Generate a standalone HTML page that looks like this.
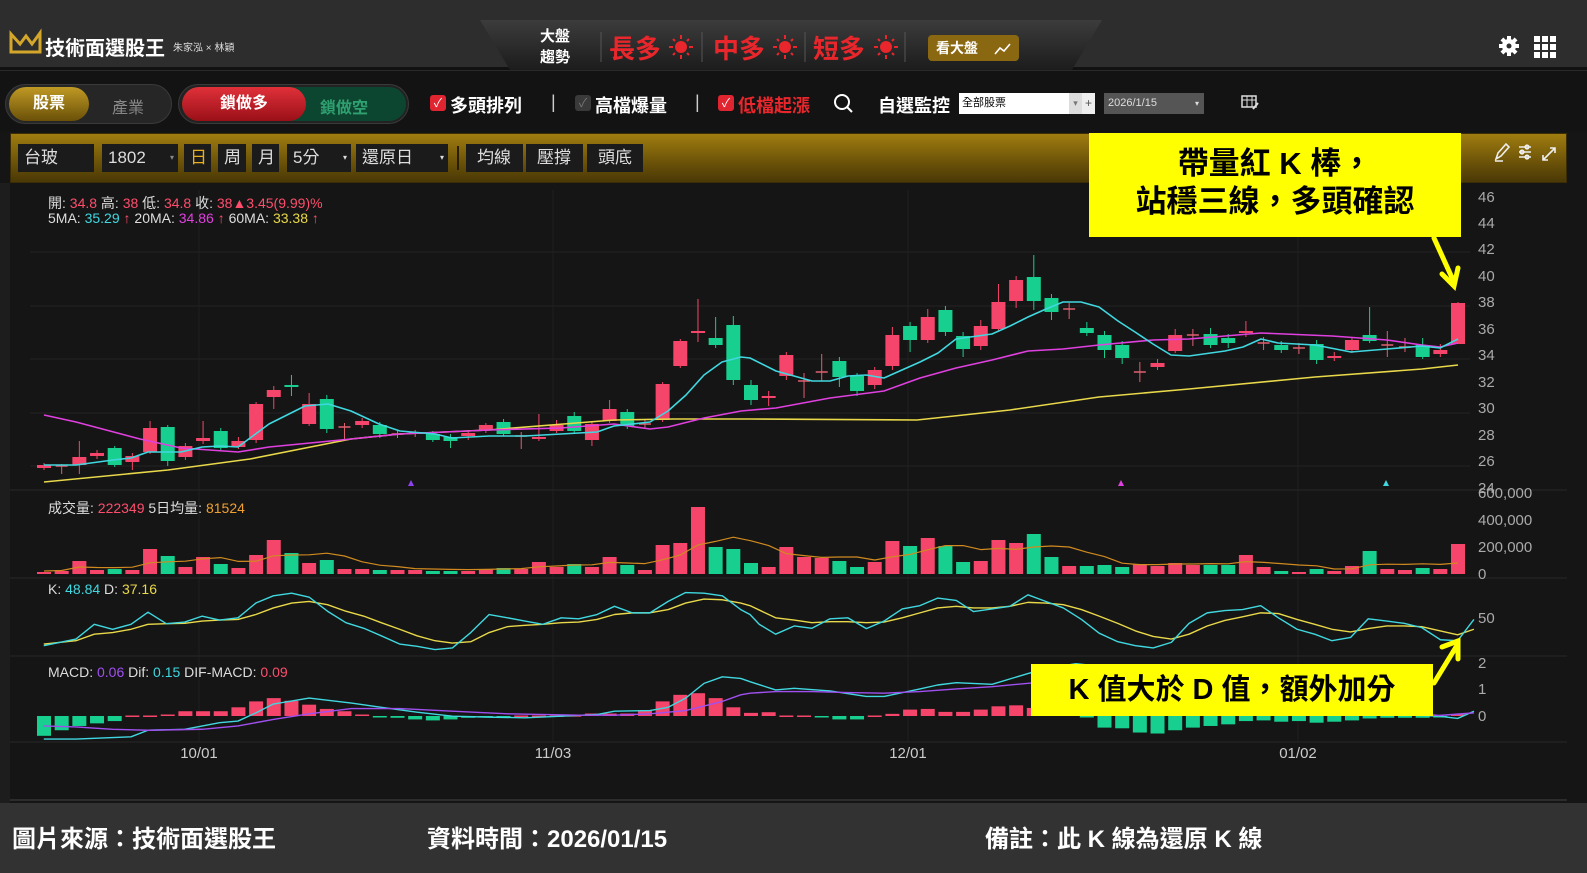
<!DOCTYPE html>
<html><head><meta charset="utf-8">
<style>
*{margin:0;padding:0;box-sizing:border-box}
body{width:1587px;height:873px;overflow:hidden;background:#151515;font-family:"Liberation Sans","Noto Sans CJK TC",sans-serif;position:relative;color:#ddd}
.abs{position:absolute}
.top{left:0;top:0;width:1587px;height:70px;background:#2d2d2d;border-bottom:3px solid #111}
.row2{left:0;top:70px;width:1587px;height:62px;background:#131313;border-top:1px solid #2a2a2a}
.gold{left:10px;top:133px;width:1557px;height:50px;background:linear-gradient(#a07d10,#6b5208 60%,#4a3906);border:1px solid #3a2d05}
.box{position:absolute;top:10px;height:28px;background:#1b1b1b;color:#ddd;font-size:17px;line-height:28px;padding-left:6px}
.bot{left:0;top:803px;width:1587px;height:70px;background:#323232;color:#fff;font-size:24px;font-weight:bold}
.cb{position:absolute;width:16px;height:16px;border-radius:3px;background:#e02530;color:#fff;font-size:12px;line-height:16px;text-align:center}
.lbl{position:absolute;font-size:18px;font-weight:bold;color:#fff}
.callout{position:absolute;background:#ffff00;color:#000;font-weight:bold;text-align:center}
</style></head><body>

<div class="abs top"></div>
<svg class="abs" style="left:0;top:0" width="1587" height="70">
<defs><linearGradient id="tab" x1="0" y1="0" x2="0" y2="1"><stop offset="0" stop-color="#3c3c3c"/><stop offset="1" stop-color="#1c1c1c"/></linearGradient></defs>
<polygon points="480,20 1102,20 1072,70 510,70" fill="url(#tab)"/>
<path d="M11 52 L11 34 L20 44 L26 36 L32 44 L40 33 L40 52 Z" fill="none" stroke="#d4a62a" stroke-width="3"/>
<line x1="601" y1="32" x2="601" y2="62" stroke="#555"/><line x1="702" y1="32" x2="702" y2="62" stroke="#555"/>
<line x1="805" y1="32" x2="805" y2="62" stroke="#555"/><line x1="905" y1="32" x2="905" y2="62" stroke="#555"/>
<g fill="#e8262b" stroke="#e8262b" stroke-width="2">
<circle cx="681" cy="47" r="6" stroke="none"/><circle cx="785" cy="47" r="6" stroke="none"/><circle cx="886" cy="47" r="6" stroke="none"/>
<path d="M681 35v4M681 55v4M669 47h4M689 47h4M673 39l2 2M687 53l2 2M673 55l2-2M687 41l2-2"/>
<path d="M785 35v4M785 55v4M773 47h4M793 47h4M777 39l2 2M791 53l2 2M777 55l2-2M791 41l2-2"/>
<path d="M886 35v4M886 55v4M874 47h4M894 47h4M878 39l2 2M892 53l2 2M878 55l2-2M892 41l2-2"/>
</g>
<rect x="928" y="35" width="91" height="26" rx="4" fill="#8a6812"/>
<path d="M995 54l5-6 4 3 6-7" stroke="#fff" stroke-width="1.6" fill="none"/>
<g fill="#fff"><circle cx="1509" cy="46" r="7"/><rect x="1507" y="36" width="4" height="20"/><rect x="1499" y="44" width="20" height="4"/><rect x="1507" y="36" width="4" height="20" transform="rotate(45 1509 46)"/><rect x="1507" y="36" width="4" height="20" transform="rotate(-45 1509 46)"/></g>
<circle cx="1509" cy="46" r="2.5" fill="#2d2d2d"/>
<g fill="#fff"><rect x="1534" y="36" width="6" height="6"/><rect x="1542" y="36" width="6" height="6"/><rect x="1550" y="36" width="6" height="6"/><rect x="1534" y="44" width="6" height="6"/><rect x="1542" y="44" width="6" height="6"/><rect x="1550" y="44" width="6" height="6"/><rect x="1534" y="52" width="6" height="6"/><rect x="1542" y="52" width="6" height="6"/><rect x="1550" y="52" width="6" height="6"/></g>
</svg>
<div class="abs" style="left:45px;top:32px;font-size:20px;font-weight:bold;color:#fff">技術面選股王</div>
<div class="abs" style="left:173px;top:39px;font-size:10px;color:#ddd">朱家泓 × 林穎</div>
<div class="abs" style="left:540px;top:26px;font-size:15px;font-weight:bold;color:#fff;line-height:21px">大盤<br>趨勢</div>
<div class="abs" style="left:609px;top:29px;font-size:26px;font-weight:bold;color:#e8262b">長多</div>
<div class="abs" style="left:713px;top:29px;font-size:26px;font-weight:bold;color:#e8262b">中多</div>
<div class="abs" style="left:813px;top:29px;font-size:26px;font-weight:bold;color:#e8262b">短多</div>
<div class="abs" style="left:936px;top:38px;font-size:14px;font-weight:bold;color:#fff">看大盤</div>

<div class="abs row2"></div>
<div class="abs" style="left:5px;top:84px;width:167px;height:40px;border-radius:20px;background:#262626;border:1px solid #3a3a3a"></div>
<div class="abs" style="left:9px;top:87px;width:80px;height:34px;border-radius:17px;background:linear-gradient(#c09a25,#6a5008);color:#fff;font-size:16px;font-weight:bold;text-align:center;line-height:34px">股票</div>
<div class="abs" style="left:112px;top:94px;color:#888;font-size:16px">產業</div>
<div class="abs" style="left:178px;top:84px;width:231px;height:40px;border-radius:20px;background:#222;border:1px solid #3a3a3a"></div>
<div class="abs" style="left:182px;top:87px;width:224px;height:34px;border-radius:17px;background:#0d4630"></div>
<div class="abs" style="left:182px;top:87px;width:124px;height:34px;border-radius:17px;background:linear-gradient(#e0303a,#9a1018);color:#fff;font-size:16px;font-weight:bold;text-align:center;line-height:34px">鎖做多</div>
<div class="abs" style="left:320px;top:94px;color:#2fa070;font-size:16px;font-weight:bold">鎖做空</div>
<div class="cb" style="left:430px;top:95px">✓</div><div class="lbl" style="left:450px;top:92px">多頭排列</div>
<div class="lbl" style="left:551px;top:92px;color:#ccc;font-weight:normal">|</div>
<div class="cb" style="left:575px;top:95px;background:#3a3a3a;color:#777">✓</div><div class="lbl" style="left:595px;top:92px">高檔爆量</div>
<div class="lbl" style="left:695px;top:92px;color:#ccc;font-weight:normal">|</div>
<div class="cb" style="left:718px;top:95px">✓</div><div class="lbl" style="left:738px;top:92px;color:#e8262b">低檔起漲</div>
<svg class="abs" style="left:832px;top:92px" width="24" height="24"><circle cx="10" cy="10" r="7" stroke="#fff" stroke-width="2" fill="none"/><line x1="15" y1="15" x2="20" y2="20" stroke="#fff" stroke-width="2"/></svg>
<div class="lbl" style="left:878px;top:92px">自選監控</div>
<div class="abs" style="left:959px;top:93px;width:136px;height:21px;background:#fff;color:#000;font-size:11px;line-height:21px;padding-left:3px">全部股票</div>
<div class="abs" style="left:1069px;top:93px;width:13px;height:21px;background:#ddd;color:#777;font-size:9px;text-align:center;line-height:21px">▾</div>
<div class="abs" style="left:1082px;top:93px;width:13px;height:21px;background:#eee;color:#555;font-size:12px;text-align:center;line-height:21px">+</div>
<div class="abs" style="left:1104px;top:93px;width:100px;height:21px;background:#555;color:#ddd;font-size:11px;line-height:21px;padding-left:4px">2026/1/15<span style="float:right;margin-right:5px;font-size:8px">▾</span></div>
<svg class="abs" style="left:1241px;top:94px" width="20" height="18"><rect x="1" y="2" width="14" height="11" stroke="#ddd" fill="none" stroke-width="1.5"/><line x1="1" y1="6" x2="15" y2="6" stroke="#ddd"/><line x1="6" y1="2" x2="6" y2="13" stroke="#ddd"/><line x1="11" y1="2" x2="11" y2="13" stroke="#ddd"/><path d="M12 15l5-6" stroke="#ddd" stroke-width="2"/></svg>

<div class="abs gold">
<div class="box" style="left:7px;width:76px">台玻</div>
<div class="box" style="left:91px;width:76px">1802<span style="float:right;margin-right:4px;font-size:8px;color:#888">▾</span></div>
<div class="box" style="left:173px;width:27px;color:#e8b020">日</div>
<div class="box" style="left:207px;width:28px">周</div>
<div class="box" style="left:241px;width:27px">月</div>
<div class="box" style="left:276px;width:64px">5分<span style="float:right;margin-right:4px;font-size:8px">▾</span></div>
<div class="box" style="left:345px;width:92px">還原日<span style="float:right;margin-right:4px;font-size:8px">▾</span></div>
<div class="abs" style="left:446px;top:12px;width:2px;height:24px;background:#2a1e00"></div>
<div class="box" style="left:455px;width:57px;padding-left:11px">均線</div>
<div class="box" style="left:515px;width:57px;padding-left:11px">壓撐</div>
<div class="box" style="left:576px;width:56px;padding-left:11px">頭底</div>
</div>
<svg class="abs" style="left:1490px;top:140px" width="75" height="24" stroke="#eee" stroke-width="1.6" fill="none">
<path d="M6 19l2-6 8-9 3 3-8 9z M5 21h8"/>
<path d="M29 7h12M29 12h12M29 17h12"/><circle cx="37" cy="7" r="1.8"/><circle cx="32" cy="12" r="1.8"/><circle cx="37" cy="17" r="1.8"/>
<path d="M53 20l12-12M60 8h5v5M53 15v5h5"/>
</svg>

<svg id="ch" class="abs" style="left:0;top:183px" width="1587" height="620"></svg>

<div class="abs" style="left:48px;top:193px;font-size:14px;color:#ddd;white-space:nowrap">開: <span style="color:#ff4d6d">34.8</span> 高: <span style="color:#ff4d6d">38</span> 低: <span style="color:#ff4d6d">34.8</span> 收: <span style="color:#ff4d6d">38▲3.45(9.99)%</span></div>
<div class="abs" style="left:48px;top:210px;font-size:14px;color:#ddd;white-space:nowrap">5MA: <span style="color:#40d8e0">35.29</span> <span style="color:#ff4d6d">↑</span> 20MA: <span style="color:#e040e0">34.86</span> <span style="color:#ff4d6d">↑</span> 60MA: <span style="color:#e8d84a">33.38</span> <span style="color:#ff4d6d">↑</span></div>
<div class="abs" style="left:48px;top:498px;font-size:14px;color:#ddd">成交量: <span style="color:#ff4d6d">222349</span> 5日均量: <span style="color:#f0a030">81524</span></div>
<div class="abs" style="left:48px;top:581px;font-size:14px;color:#ddd">K: <span style="color:#40d8e0">48.84</span> D: <span style="color:#e8d84a">37.16</span></div>
<div class="abs" style="left:48px;top:664px;font-size:14px;color:#ddd">MACD: <span style="color:#a050f0">0.06</span> Dif: <span style="color:#40d8e0">0.15</span> DIF-MACD: <span style="color:#ff4d6d">0.09</span></div>

<div class="callout" style="left:1089px;top:133px;width:372px;height:104px;font-size:31px;line-height:38px;padding-top:12px">帶量紅 K 棒，<br>站穩三線，多頭確認</div>
<div class="callout" style="left:1031px;top:664px;width:402px;height:52px;font-size:29px;line-height:52px">K 值大於 D 值，額外加分</div>
<svg class="abs" style="left:1420px;top:230px" width="60" height="70"><path d="M14 8 L33 50 M22 44 L34 56 L38 38" stroke="#ffff00" stroke-width="5" fill="none" stroke-linecap="round"/></svg>
<svg class="abs" style="left:1420px;top:625px" width="60" height="70"><path d="M14 58 L36 22 M22 22 L38 16 L38 34" stroke="#ffff00" stroke-width="5" fill="none" stroke-linecap="round"/></svg>

<div class="abs bot">
<div class="abs" style="left:12px;top:16px">圖片來源：技術面選股王</div>
<div class="abs" style="left:427px;top:16px">資料時間：2026/01/15</div>
<div class="abs" style="left:985px;top:16px">備註：此 K 線為還原 K 線</div>
</div>

<script>
const svg=document.getElementById('ch');const OY=183;let h='';
function L(x1,y1,x2,y2,c,w){h+=`<line x1="${x1}" y1="${y1-OY}" x2="${x2}" y2="${y2-OY}" stroke="${c}" stroke-width="${w||1}"/>`}
function R(x,y,w,hh,c){h+=`<rect x="${x}" y="${y-OY}" width="${w}" height="${Math.max(hh,1.5)}" fill="${c}"/>`}
function T(x,y,t,c,a){h+=`<text x="${x}" y="${y-OY}" fill="${c}" font-size="15" font-family="Liberation Sans, sans-serif" ${a?'text-anchor="middle"':''}>${t}</text>`}
function P(pts,c,w){h+=`<polyline points="${pts.map(p=>p[0]+','+(p[1]-OY)).join(' ')}" fill="none" stroke="${c}" stroke-width="${w||1.6}" stroke-linejoin="round"/>`}
h+=`<rect x="0" y="0" width="10" height="620" fill="#1d1d1d"/>`;
// grids
[252,306,359,413,466].forEach(y=>L(30,y,1470,y,'#242424'));
[199,553,908,1298].forEach(x=>L(x,190,x,742,'#202020'));
[490,578,656,742].forEach(y=>L(10,y,1567,y,'#262626'));
L(10,800,1567,800,'#2c2c2c',2);
// axis labels
[[46,197],[44,223],[42,249],[40,276],[38,302],[36,329],[34,355],[32,382],[30,408],[28,435],[26,461],[24,488]].forEach(a=>T(1478,a[1]+5,a[0],'#aaa'));
[['600,000',493],['400,000',520],['200,000',547],['0',574]].forEach(a=>T(1478,a[1]+5,a[0],'#aaa'));
[['50',618],['2',663],['1',689],['0',716]].forEach(a=>T(1478,a[1]+5,a[0],'#aaa'));
[['10/01',199],['11/03',553],['12/01',908],['01/02',1298]].forEach(a=>T(a[1],758,a[0],'#ccc',1));
const RED='#f5456a',GRN='#17cf8e';
const X=i=>44+i*17.675;
const C=[['r',465,468,463,470],['c',466,466,464,474],['r',457,465,441,474],['r',453,456,450,459],['g',448,465,446,467],['r',456,462,453,470],['r',428,452,421,454],['g',427,461,425,466],['r',446,457,443,460],['r',438,441,421,444],['g',431,448,428,450],['r',441,447,437,449],['r',404,440,402,443],['r',390,397,386,409],['g',385,387,375,396],['r',404,424,393,426],['g',399,429,395,433],['c',427,427,423,439],['r',421,425,418,428],['g',425,434,422,438],['c',434,434,430,438],['c',433,433,430,437],['g',434,440,431,442],['g',437,441,434,448],['r',433,436,430,440],['r',425,430,423,433],['g',422,434,419,436],['c',436,436,432,449],['r',437,439,414,441],['r',425,431,420,433],['g',416,431,412,434],['r',424,440,422,446],['r',409,421,400,423],['g',412,426,409,429],['c',424,424,420,428],['r',384,420,382,422],['r',341,366,339,368],['r',331,333,299,342],['g',338,345,317,348],['g',325,380,316,385],['g',385,400,380,405],['r',396,398,391,406],['r',355,376,352,380],['c',381,381,373,398],['c',372,372,354,381],['g',361,377,357,387],['g',376,391,373,396],['r',370,385,367,389],['r',335,366,327,370],['g',326,340,322,352],['r',317,340,309,343],['g',310,332,306,336],['g',336,349,332,357],['r',326,346,320,350],['r',302,329,284,332],['r',280,301,276,308],['g',277,301,255,310],['g',298,312,294,320],['c',309,309,303,319],['g',328,333,322,336],['g',335,350,331,358],['g',345,358,341,364],['c',372,372,362,382],['r',363,367,359,370],['r',335,351,329,353],['c',335,335,329,346],['g',334,345,328,348],['g',338,343,334,348],['r',331,333,321,337],['c',343,343,337,350],['g',345,350,341,353],['c',348,348,343,354],['g',344,360,340,364],['r',356,358,352,361],['r',340,350,337,353],['g',335,341,307,343],['c',345,345,331,357],['c',347,347,338,352],['g',345,357,338,359],['r',350,354,344,357],['r',303,344,302,344]];
C.forEach((c,i)=>{const x=X(i),col=c[0]=='g'?GRN:(c[0]=='r'?RED:'#e06070');L(x,c[3],x,c[4],col,1);if(c[0]=='c')L(x-6,c[1],x+6,c[1],col,1.5);else R(x-7,c[1],14,c[2]-c[1],col)});
const z3=a=>a.map(p=>[30+p[0]/2.178,240+p[1]/3.04]),z4=a=>a.map(p=>[750+p[0]/2.148,240+p[1]/3.04]);
// MA60
P([[44,482],[168,470],[250,459],[351,439],[400,434],[489,430],[614,420],[673,419],[741,419],[750,419],[917,420],[1010,410],[1099,397],[1189,389],[1315,377],[1422,369],[1458,365]],'#e8d84a');
// MA20
P([[44,415],[76,422],[140,439],[181,448],[238,452],[269,447],[351,439],[400,434],[489,430],[561,428],[614,424],[650,429],[668,427],[704,418],[741,411],[776,408],[830,398],[884,391],[920,378],[956,368],[992,360],[1028,351],[1063,349],[1099,345],[1153,340],[1189,339],[1261,333],[1332,336],[1387,340],[1422,345],[1440,347],[1458,343]],'#e040e0');
// MA5
P([[44,465],[76,465],[113,460],[131,458],[148,452],[181,452],[202,447],[220,446],[238,447],[269,424],[305,406],[328,404],[351,411],[379,424],[400,431],[435,434],[452,438],[489,436],[525,436],[579,433],[597,432],[614,426],[650,422],[668,411],[686,395],[704,375],[722,362],[741,357],[750,358],[776,371],[812,381],[830,381],[848,376],[866,375],[884,378],[902,370],[920,362],[938,353],[956,339],[992,334],[1010,326],[1028,317],[1046,309],[1063,302],[1081,302],[1099,307],[1118,321],[1135,332],[1153,344],[1171,355],[1189,356],[1225,351],[1243,347],[1261,339],[1278,343],[1315,345],[1351,352],[1387,349],[1422,346],[1440,348],[1458,339]],'#40d8e0');
// markers
h+=`<polygon points="411,${480-OY} 408,${486-OY} 414,${486-OY}" fill="#9040f0"/><polygon points="1121,${480-OY} 1118,${486-OY} 1124,${486-OY}" fill="#e040e0"/><polygon points="1386,${480-OY} 1383,${486-OY} 1389,${486-OY}" fill="#40d8e0"/>`;
// volume
const V=[2,3,13,4,5,4,25,18,7,17,10,6,19,34,21,11,14,5,5,4,4,4,3,3,3,5,6,5,12,7,10,7,17,9,4,29,31,67,27,25,11,7,27,17,16,13,7,12,33,28,36,28,12,13,34,31,40,17,8,8,9,7,10,8,11,9,9,9,19,7,3,2,5,3,8,23,5,4,6,5,30];
V.forEach((v,i)=>{const c=C[i][0]=='g'?GRN:RED;R(X(i)-7,574-v,14,v,c)});
const MA=V.map((v,i)=>{let s=0,n=0;for(let k=Math.max(0,i-4);k<=i;k++){s+=V[k];n++}return [X(i),574-s/n-1]});
P(MA,'#d08a20',1.2);
// KD
const k5=a=>a.map(p=>[30+p[0]/2.178,485+p[1]/3.05]),k6=a=>a.map(p=>[750+p[0]/2.148,485+p[1]/3.05]);
P(k5([[30,485],[100,475],[140,455],[180,450],[220,440],[257,425],[297,423],[337,422],[375,415],[413,412],[453,410],[492,395],[530,375],[570,360],[608,355],[648,365],[688,385],[727,400],[765,420],[805,440],[843,460],[882,475],[920,482],[960,478],[1000,450],[1040,432],[1078,428],[1117,425],[1157,420],[1195,418],[1235,410],[1273,395],[1312,390],[1350,390],[1390,380],[1428,360],[1468,348],[1508,350],[1548,360]]).concat(k6([[0,368],[55,405],[95,412],[133,420],[172,417],[210,417],[250,420],[288,418],[327,405],[365,390],[403,375],[443,370],[480,375],[520,375],[558,370],[597,358],[635,360],[673,365],[712,380],[750,400],[790,422],[828,445],[866,462],[905,470],[943,455],[982,430],[1020,413],[1058,402],[1097,390],[1135,392],[1175,410],[1213,425],[1250,440],[1290,448],[1328,438],[1368,430],[1405,430],[1443,432],[1483,445],[1520,457],[1555,440]])),'#e8d84a',1.4);
P(k5([[30,490],[100,470],[140,425],[180,440],[220,425],[257,388],[297,423],[337,418],[375,400],[413,412],[453,405],[492,360],[530,338],[570,330],[608,342],[648,385],[688,420],[727,437],[765,460],[805,485],[843,492],[882,502],[920,497],[960,450],[1000,395],[1040,405],[1078,415],[1117,425],[1157,405],[1195,408],[1235,395],[1273,370],[1312,390],[1350,390],[1390,355],[1428,328],[1468,330],[1508,338],[1548,380]]).concat(k6([[0,395],[20,425],[55,455],[95,430],[133,437],[172,408],[210,405],[250,438],[288,415],[327,378],[365,368],[403,345],[443,352],[480,386],[520,378],[558,370],[597,335],[635,355],[673,375],[712,410],[750,452],[790,478],[828,490],[866,497],[905,480],[943,422],[982,390],[1020,383],[1058,380],[1097,368],[1135,405],[1175,440],[1213,455],[1250,475],[1290,465],[1328,408],[1368,415],[1405,422],[1443,435],[1483,472],[1520,475],[1555,410]])),'#40d8e0',1.4);
// MACD hist
const H=[765,748,735,727,720,703,703,700,690,690,690,678,660,650,658,670,683,690,700,708,710,715,718,715,710,708,707,703,703,703,702,697,697,697,688,660,640,635,650,678,695,693,703,703,708,715,715,703,698,685,683,692,692,685,675,672,680,690,700,705,740,742,755,758,748,740,735,730,720,718,722,720,725,722,718,712,710,710,710,708,700];
H.forEach((z,i)=>{const y=485+z/3.05,c=y>716?GRN:RED;R(X(i)-7,Math.min(y,716),14,Math.abs(y-716),c)});
P(k5([[30,775],[100,775],[220,768],[257,748],[337,745],[413,725],[453,720],[492,695],[530,668],[608,650],[700,665],[765,678],[843,693],[920,705],[1000,708],[1078,710],[1157,705],[1235,700],[1273,690],[1350,688],[1390,678],[1428,650],[1468,605],[1508,585],[1548,590]]).concat(k6([[0,600],[55,625],[95,620],[172,628],[250,645],[288,645],[365,622],[403,610],[443,603],[520,608],[597,575],[635,560],[700,545],[800,560],[900,600],[1000,640],[1100,670],[1250,690],[1400,700],[1480,705],[1520,712],[1555,690]])),'#40d8e0',1.4);
P(k5([[30,735],[100,738],[180,745],[257,748],[375,745],[453,735],[530,715],[608,698],[700,682],[805,682],[920,690],[1040,698],[1195,702],[1273,702],[1350,698],[1428,688],[1508,660],[1548,640]]).concat(k6([[0,635],[55,630],[133,630],[210,633],[288,635],[365,630],[443,622],[520,615],[635,600],[800,590],[950,610],[1100,640],[1300,680],[1480,703],[1555,695]])),'#a050f0',1.4);
svg.innerHTML=h;
</script>
</body></html>
